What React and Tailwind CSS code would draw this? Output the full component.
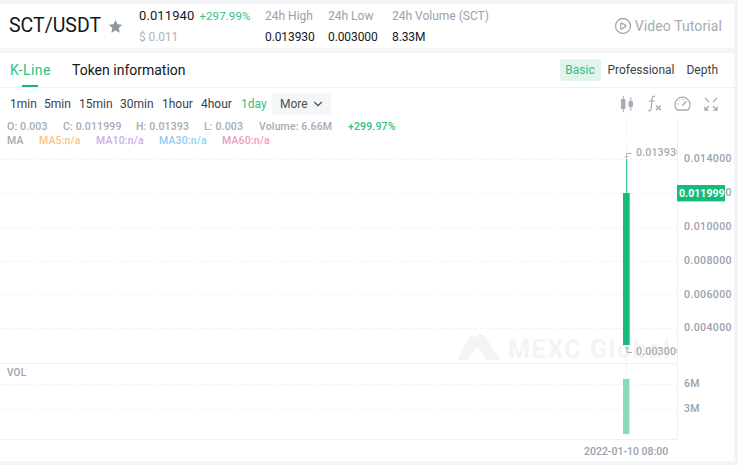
import React from "react";
import { CirclePlay, ChevronDown } from "lucide-react";

const FONT = "Roboto, 'Liberation Sans', sans-serif";

function Stat({ label, value, className }) {
  return (
    <div className={"flex flex-col " + className}>
      <span className="text-[12px] leading-[14px] text-[#9aa1a9]">{label}</span>
      <span className="mt-[7px] text-[12px] leading-[14px] text-[#14161a] tracking-[-0.1px]">{value}</span>
    </div>
  );
}

function Chart() {
  return (
    <svg width="734" height="342" viewBox="0 119 734 342" className="block" style={{ fontFamily: FONT }}>
      <defs>
        <clipPath id="plot"><rect x="0" y="119" width="677" height="320" /></clipPath>
      </defs>
      <g clipPath="url(#plot)">
        <g transform="translate(458 333)" fill="#f3f4f5">
          <path d="M0 24 L11 5 Q14 1 17 5 L21 11 L11 25 Q10 27 7 27 L3 27 Q-1 27 0 24Z" />
          <path d="M18 4 Q21 0 25 2 Q27 3 28 5 L41 24 Q42 27 39 27 L30 27 Q28 27 27 25 L16 8Z" />
          <text x="50" y="25" fontSize="25" fontWeight="700" letterSpacing="1.6">MEXC Global</text>
        </g>
        {[159, 193, 227, 261, 294, 328, 384, 409].map((y) => (
          <line key={y} x1="0" x2="677" y1={y + 0.5} y2={y + 0.5} stroke="#eff0f2" strokeDasharray="2.5 2.5" />
        ))}
        <line x1="626.500" x2="626.500" y1="119" y2="439" stroke="#eeeff1" strokeDasharray="2.5 2.5" />
        <rect x="626" y="159" width="1.300" height="34" fill="#3fc896" />
        <rect x="623" y="193" width="6.700" height="152" fill="#16ba7a" />
        <rect x="623" y="379" width="6.400" height="55" fill="#88dab8" />
        <path d="M631.500 153.500 H626.500 V158 M624.700 156.200 L626.500 158 L628.300 156.200" fill="none" stroke="#a4abb3" strokeWidth="0.9" />
        <path d="M632 352.500 H627 V347 M625.200 348.800 L627 347 L628.800 348.800" fill="none" stroke="#a4abb3" strokeWidth="0.9" />
        <text x="636" y="156" fontSize="10.500" fontWeight="500" fill="#a4abb3" letterSpacing="0.2">0.013930</text>
        <text x="636" y="355" fontSize="10.500" fontWeight="500" fill="#a4abb3" letterSpacing="0.2">0.003000</text>
      </g>
      <line x1="0" x2="677" y1="363.500" y2="363.500" stroke="#eff0f2" />
      <line x1="0" x2="677" y1="439.500" y2="439.500" stroke="#eff0f2" />
      <line x1="677.500" x2="677.500" y1="119" y2="440" stroke="#eff0f2" />
      {[[158, "0.014000"], [192, "0.012000"], [226, "0.010000"], [260, "0.008000"], [294, "0.006000"], [327, "0.004000"], [383, "6M"], [408, "3M"]].map(([y, t]) => (
        <text key={t} x="684" y={y + 4} fontSize="10.500" fontWeight="500" fill="#9aa1a9" letterSpacing="0.4">{t}</text>
      ))}
      <rect x="677" y="185" width="48" height="16" fill="#16ba7a" />
      <rect x="677" y="201" width="48" height="1" fill="#a5e3ca" />
      <text x="679" y="196.500" fontSize="10.500" fontWeight="700" fill="#ffffff" letterSpacing="0.05">0.011999</text>
      <text x="7" y="375.500" fontSize="10" fontWeight="500" fill="#9aa1a9" letterSpacing="0.2">VOL</text>
      <text x="584" y="455" fontSize="10.500" fontWeight="500" fill="#9aa1a9" letterSpacing="0">2022-01-10 08:00</text>
    </svg>
  );
}

function CandleIcon() {
  return (
    <svg width="14" height="16" viewBox="0 0 14 16" fill="#a6adb5">
      <rect x="1" y="3" width="4.500" height="10" rx="1" />
      <rect x="2.800" y="0" width="1" height="16" />
      <rect x="8.500" y="5" width="4.500" height="6" rx="1" />
      <rect x="10.300" y="1" width="1" height="14" />
    </svg>
  );
}

function FxIcon() {
  return (
    <svg width="15" height="17" viewBox="0 0 15 17" fill="none" stroke="#a6adb5">
      <path d="M8 1.500 Q5.500 0.500 5 3.500 L4.200 13.500 Q3.800 16.500 1.200 15.500" strokeWidth="1.300" />
      <path d="M2 6 H7.500" strokeWidth="1.200" />
      <path d="M9 10.500 L13.800 15 M13.800 10.500 L9 15" strokeWidth="1.600" />
    </svg>
  );
}

function GaugeIcon() {
  return (
    <svg width="17" height="15" viewBox="0 0 17 15" fill="none" stroke="#a6adb5" strokeWidth="1.300">
      <path d="M3.200 14 A7.500 7.500 0 1 1 13.800 14 Z" />
      <path d="M8.500 9.500 L12 5.500" strokeWidth="1.500" />
      <path d="M3.500 8 H4.800 M5.200 4.300 L6 5.200 M9 3 V4.300" strokeWidth="1" />
    </svg>
  );
}

function ExpandIcon() {
  return (
    <svg width="14" height="14" viewBox="0 0 14 14" fill="none" stroke="#a6adb5" strokeWidth="1.300">
      <path d="M1 1 L5 5 M9 5 L13 1 M1 13 L5 9 M9 9 L13 13" />
      <path d="M1 13 V10.500 L3.500 13Z M13 13 V10.500 L10.500 13Z" fill="#a6adb5" />
    </svg>
  );
}

function Legend() {
  return (
    <div className="absolute left-[7px] top-[1px] text-[10.5px] leading-[14px] font-medium text-[#a4abb3] tracking-[0.15px]">
      <div className="flex h-[14px]">
        <span className="w-[56px]">O: 0.003</span>
        <span className="w-[73px]">C: 0.011999</span>
        <span className="w-[68px]">H: 0.01393</span>
        <span className="w-[55px]">L: 0.003</span>
        <span className="w-[89px]">Volume: 6.66M</span>
        <span className="text-[#2fbf85]">+299.97%</span>
      </div>
      <div className="flex h-[14px]">
        <span className="w-[32px]">MA</span>
        <span className="w-[57px] text-[#fbc37f]">MA5:n/a</span>
        <span className="w-[63px] text-[#c9aee6]">MA10:n/a</span>
        <span className="w-[63px] text-[#8fcbf5]">MA30:n/a</span>
        <span className="text-[#f09cc1]">MA60:n/a</span>
      </div>
    </div>
  );
}

export default function App() {
  return (
    <div className="w-[738px] h-[465px] overflow-hidden bg-[#f4f5f7] pt-[4px] pr-[4px]" style={{ fontFamily: FONT }}>
      <header className="h-[44px] bg-white flex items-center pl-[9px] pr-[12px]">
        <h1 className="text-[19.5px] leading-none text-[#14161a] font-normal w-[93px] whitespace-nowrap">SCT/USDT</h1>
        <svg className="ml-[6px]" width="15" height="15" viewBox="0 0 24 24" fill="#8f979f">
          <path d="M12 1.500 L15.300 8.300 L22.700 9.300 L17.300 14.500 L18.600 22 L12 18.400 L5.400 22 L6.700 14.500 L1.300 9.300 L8.700 8.300Z" />
        </svg>
        <div className="ml-[16px] w-[126px] flex flex-col">
          <div className="flex items-baseline whitespace-nowrap">
            <span className="text-[13px] leading-[14px] text-[#14161a] tracking-[0.1px]">0.011940</span>
            <span className="ml-[5px] text-[11.5px] leading-[14px] text-[#2fbf85] tracking-[0.1px]">+297.99%</span>
          </div>
          <span className="mt-[7px] text-[12px] leading-[14px] text-[#adb5bd] tracking-[-0.1px]">$ 0.011</span>
        </div>
        <Stat className="w-[63px]" label="24h High" value="0.013930" />
        <Stat className="w-[64px]" label="24h Low" value="0.003000" />
        <Stat className="" label="24h Volume (SCT)" value="8.33M" />
        <div className="ml-auto flex items-center gap-[3px] text-[14px] text-[#a4abb3] tracking-[0.1px]">
          <CirclePlay size={18} strokeWidth={1.700} />
          <span>Video Tutorial</span>
        </div>
      </header>

      <main className="mt-[5px] h-[408px] bg-white">
        <div className="h-[35px] flex items-center border-b border-[#f0f1f3] pl-[10px] pr-[16px]">
          <div className="relative w-[41px] h-full flex items-center text-[14px] text-[#2fbf85] tracking-[0.4px]">
            K-Line
            <span className="absolute left-[12px] bottom-0 w-[16px] h-[2px] bg-[#16ba7a]" />
          </div>
          <div className="ml-[21px] text-[14px] text-[#14161a]">Token information</div>
          <div className="ml-auto flex items-center text-[12px] text-[#3a3f47]">
            <span className="h-[22px] w-[41px] flex items-center justify-center rounded-[2px] bg-[#dff5ec] text-[#2fbf85]">Basic</span>
            <span className="ml-[7px]">Professional</span>
            <span className="ml-[12px]">Depth</span>
          </div>
        </div>

        <div className="h-[31px] flex items-center pl-[10px] text-[12px] text-[#3a3f47]">
          <span className="w-[34px]">1min</span>
          <span className="w-[35px]">5min</span>
          <span className="w-[41px]">15min</span>
          <span className="w-[42px]">30min</span>
          <span className="w-[39px]">1hour</span>
          <span className="w-[40px]">4hour</span>
          <span className="w-[31px] text-[#2fbf85]">1day</span>
          <span className="h-[22px] w-[59px] pl-[8px] flex items-center gap-[3px] rounded-[2px] bg-[#f5f6f8] text-[#4a5059]">
            More <ChevronDown size={14} strokeWidth={2} />
          </span>
          <div className="ml-[289px] flex items-center">
            <CandleIcon />
            <span className="ml-[13px]"><FxIcon /></span>
            <span className="ml-[12px]"><GaugeIcon /></span>
            <span className="ml-[13px]"><ExpandIcon /></span>
          </div>
        </div>

        <div className="relative">
          <Chart />
          <Legend />
        </div>
      </main>
    </div>
  );
}
